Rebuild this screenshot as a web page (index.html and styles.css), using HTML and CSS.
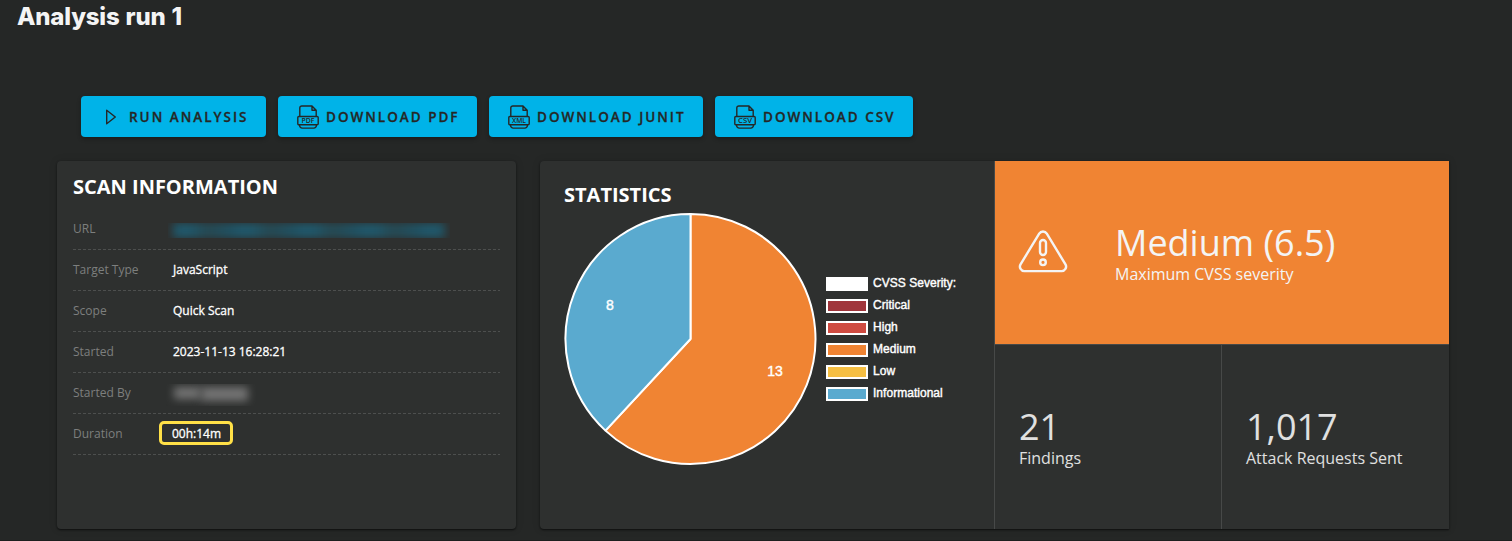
FILE: index.html
```html
<!DOCTYPE html>
<html lang="en">
<head>
<meta charset="utf-8">
<title>Analysis run 1</title>
<link rel="stylesheet" href="styles.css">
</head>
<body>
<main class="page">
  <h1 class="page-title">Analysis run 1</h1>

  <div class="actions">
    <button class="btn btn-run">
      <svg class="icon-play" viewBox="0 0 12 18"><path d="M1.7 2.2 10.3 9 1.7 15.8Z"/></svg>
      <span>RUN ANALYSIS</span>
    </button>
    <button class="btn btn-pdf">
      <svg class="icon-file" viewBox="0 0 22 24"><path d="M2.800 11.500V3a2 2 0 0 1 2-2H15l4.200 4.200v6.300M15 1v4.200h4.200M1.800 11.500h18.400a1 1 0 0 1 1 1v6.200a1 1 0 0 1-1 1H1.800a1 1 0 0 1-1-1v-6.200a1 1 0 0 1 1-1M2.600 19.700v.800a2.600 2.600 0 0 0 2.600 2.600h11.600a2.600 2.600 0 0 0 2.600-2.600v-.800"/><text x="11" y="18.200" textLength="13" lengthAdjust="spacingAndGlyphs">PDF</text></svg>
      <span>DOWNLOAD PDF</span>
    </button>
    <button class="btn btn-junit">
      <svg class="icon-file" viewBox="0 0 22 24"><path d="M2.800 11.500V3a2 2 0 0 1 2-2H15l4.200 4.200v6.300M15 1v4.200h4.200M1.800 11.500h18.400a1 1 0 0 1 1 1v6.200a1 1 0 0 1-1 1H1.800a1 1 0 0 1-1-1v-6.200a1 1 0 0 1 1-1M2.600 19.700v.800a2.600 2.600 0 0 0 2.600 2.600h11.600a2.600 2.600 0 0 0 2.600-2.600v-.800"/><text x="11" y="18.200" textLength="14" lengthAdjust="spacingAndGlyphs">XML</text></svg>
      <span>DOWNLOAD JUNIT</span>
    </button>
    <button class="btn btn-csv">
      <svg class="icon-file" viewBox="0 0 22 24"><path d="M2.800 11.500V3a2 2 0 0 1 2-2H15l4.200 4.200v6.300M15 1v4.200h4.200M1.800 11.500h18.400a1 1 0 0 1 1 1v6.200a1 1 0 0 1-1 1H1.800a1 1 0 0 1-1-1v-6.200a1 1 0 0 1 1-1M2.600 19.700v.800a2.600 2.600 0 0 0 2.600 2.600h11.600a2.600 2.600 0 0 0 2.600-2.600v-.800"/><text x="11" y="18.200" textLength="14" lengthAdjust="spacingAndGlyphs">CSV</text></svg>
      <span>DOWNLOAD CSV</span>
    </button>
  </div>

  <div class="panels">
    <section class="card scan">
      <h2 class="card-title">SCAN INFORMATION</h2>
      <dl class="info">
        <div class="row"><dt>URL</dt><dd class="redacted redacted-url"><span class="smudge"></span></dd></div>
        <div class="row"><dt>Target Type</dt><dd>JavaScript</dd></div>
        <div class="row"><dt>Scope</dt><dd>Quick Scan</dd></div>
        <div class="row"><dt>Started</dt><dd>2023-11-13 16:28:21</dd></div>
        <div class="row"><dt>Started By</dt><dd class="redacted redacted-user"><span class="smudge"></span><span class="smudge second"></span></dd></div>
        <div class="row"><dt>Duration</dt><dd class="highlight">00h:14m</dd></div>
      </dl>
    </section>

    <section class="card stats">
      <div class="chart-area">
        <h2 class="card-title">STATISTICS</h2>
        <div class="chart">
          <svg class="pie" viewBox="0 0 254 254">
            <path class="medium" d="M126.500 127V2A125 125 0 1 1 41.470 218.630Z"/>
            <path class="informational" d="M126.500 127 41.470 218.630A125 125 0 0 1 126.500 2Z"/>
            <text x="211" y="164">13</text>
            <text x="46" y="98">8</text>
          </svg>
          <ul class="legend">
            <li><i class="swatch"></i><span>CVSS Severity:</span></li>
            <li><i class="swatch critical"></i><span>Critical</span></li>
            <li><i class="swatch high"></i><span>High</span></li>
            <li><i class="swatch medium"></i><span>Medium</span></li>
            <li><i class="swatch low"></i><span>Low</span></li>
            <li><i class="swatch informational"></i><span>Informational</span></li>
          </ul>
        </div>
      </div>
      <div class="metrics">
        <div class="severity">
          <svg class="icon-warning" viewBox="0 0 50 44"><path d="M21.200 3.600a4.500 4.500 0 0 1 7.600 0L47.600 34.600a4.500 4.500 0 0 1-3.900 6.500H6.300a4.500 4.500 0 0 1-3.900-6.500Z"/><rect x="22" y="10" width="6" height="15" rx="3"/><circle cx="25" cy="32.300" r="2.800"/></svg>
          <div class="metric">
            <strong>Medium (6.5)</strong>
            <span>Maximum CVSS severity</span>
          </div>
        </div>
        <div class="counts">
          <div class="metric count"><strong>21</strong><span>Findings</span></div>
          <div class="metric count"><strong>1,017</strong><span>Attack Requests Sent</span></div>
        </div>
      </div>
    </section>
  </div>
</main>
</body>
</html>
```
FILE: styles.css
```css
* { box-sizing: border-box; }
body {
  margin: 0;
  background: #252726;
  color: #fff;
  font-family: "Open Sans", sans-serif;
}
.page { height: 541px; overflow: hidden; border-bottom: 1px solid #1d1f1e; }
.page-title {
  margin: 0;
  padding: 2px 0 0 17px;
  height: 96px;
  font: 800 24px/29px Inter, sans-serif;
  letter-spacing: -.2px;
  word-spacing: 1px;
  color: #f4f4f4;
}
.actions { display: flex; gap: 12px; padding-left: 81px; }
.btn {
  display: flex;
  align-items: center;
  height: 41px;
  padding: 0;
  border: 0;
  border-radius: 4px;
  background: #00b3e8;
  color: #252726;
  font: 600 13.500px/20px "Open Sans", sans-serif;
  letter-spacing: 2px;
  white-space: nowrap;
  box-shadow: 0 2px 4px rgba(0, 0, 0, .3);
}
.btn span { -webkit-text-stroke: .3px currentColor; }
.btn-run { width: 185px; padding-left: 24px; }
.btn-pdf { width: 199px; padding-left: 19px; }
.btn-junit { width: 214px; padding-left: 19px; }
.btn-csv { width: 198px; padding-left: 19px; }
.icon-play { width: 12px; height: 18px; margin-right: 12px; }
.icon-file { width: 22px; height: 24px; margin: 1px 7px 0 0; }
.icon-play path, .icon-file path {
  fill: none;
  stroke: currentColor;
  stroke-width: 1.4;
  stroke-linejoin: round;
}
.icon-file text {
  font: 600 7.500px "Open Sans", sans-serif;
  letter-spacing: 0;
  text-anchor: middle;
  fill: currentColor;
}
.panels { display: flex; gap: 24px; padding: 24px 63px 0 57px; }
.card {
  height: 368px;
  background: #2e302f;
  border-radius: 4px;
  box-shadow: 0 1px 2px rgba(0, 0, 0, .6), 0 0 8px rgba(0, 0, 0, .12);
}
.card-title { margin: 0; font-size: 20px; line-height: 24px; font-weight: 700; }
.scan { width: 459px; padding: 14px 16px; }
.info { margin: 10px 0 0; }
.row {
  display: flex;
  align-items: center;
  height: 41px;
  padding-bottom: 2px;
  font-size: 12px;
  background: repeating-linear-gradient(90deg, #4d4f4e 0 3px, transparent 3px 5px) left bottom / 100% 1px no-repeat;
}
dt { width: 100px; color: #7d7f7e; }
dd { margin: 0; white-space: nowrap; -webkit-text-stroke: .3px #fff; }
.redacted { overflow: hidden; }
.redacted-url { width: 282px; height: 15px; margin: 4px 0 0 -5px; padding: 0 5px; }
.redacted-url .smudge {
  display: block;
  height: 15px;
  background: repeating-linear-gradient(90deg, #20586b 0 18px, #254b56 32px 40px, #205263 56px 62px);
  filter: blur(4px);
}
.redacted-user { display: flex; width: 90px; height: 22px; margin: 4px 0 0 -7px; padding: 3px 8px; }
.redacted-user .smudge { width: 28px; height: 12px; background: #747474; filter: blur(4.500px); }
.redacted-user .second { width: 48px; height: 14px; }
.highlight {
  width: 74px;
  height: 24px;
  margin: -1px 0 0 -14px;
  padding-left: 10px;
  border: 3px solid #ffe047;
  border-radius: 5px;
  line-height: 19px;
}
.stats { display: flex; width: 909px; overflow: hidden; border-radius: 4px 0 0 4px; }
.chart-area { width: 454px; padding: 22px 0 0 24px; }
.chart { display: flex; align-items: flex-start; padding-top: 5px; }
.pie { width: 254px; height: 254px; flex: none; margin-right: 8px; }
.pie path { stroke: #fff; stroke-width: 2; stroke-linejoin: bevel; }
.pie text {
  fill: #fff;
  stroke: #fff;
  stroke-width: .4px;
  text-anchor: middle;
  font: 14px "Liberation Sans", Arial, sans-serif;
}
.pie .medium { fill: #f08433; }
.pie .informational { fill: #5aaacf; }
.legend {
  margin: 60px 0 0;
  padding: 0;
  list-style: none;
  font: 12px/22px "Liberation Sans", Arial, sans-serif;
  letter-spacing: .03px;
  -webkit-text-stroke: .4px #fff;
}
.legend li { display: flex; align-items: center; height: 22px; white-space: nowrap; }
.swatch { width: 42px; height: 14px; margin: 2px 5px 0 0; border: 2px solid #fff; background: #fff; }
.swatch.critical { background: #a0353b; }
.swatch.high { background: #cf4b41; }
.swatch.medium { background: #f08433; }
.swatch.low { background: #f6bf43; }
.swatch.informational { background: #5aaacf; }
.metrics { width: 455px; border-left: 1px solid #474948; }
.severity { display: flex; height: 183px; background: #f08433; color: #f4f4f4; }
.icon-warning { width: 50px; height: 44px; margin: 69px 47px 0 23px; }
.icon-warning * { fill: none; stroke: currentColor; stroke-width: 2.400; stroke-linejoin: round; }
.metric { display: flex; flex-direction: column; white-space: nowrap; }
.severity .metric { padding-top: 61px; }
.metric strong { font-size: 36px; line-height: 42px; font-weight: 400; }
.metric span { font-size: 16px; line-height: 20px; }
.counts { display: flex; height: 185px; border-top: 1px solid #474948; color: #e0e0e0; }
.count { width: 226px; padding: 61px 0 0 24px; }
.count + .count { border-left: 1px solid #474948; }
```
